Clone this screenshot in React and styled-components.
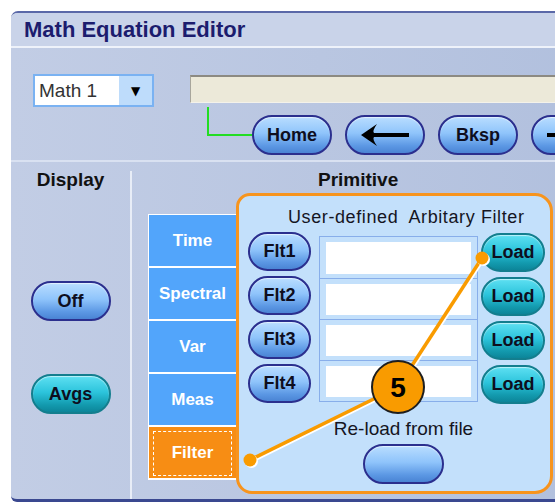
import React from 'react';
import styled, { createGlobalStyle, css } from 'styled-components';

const GlobalStyle = createGlobalStyle`
  html, body {
    margin: 0;
    padding: 0;
    background: #ffffff;
    overflow: hidden;
  }
  body {
    font-family: "Liberation Sans", Arial, sans-serif;
  }
`;

const Page = styled.div`
  position: relative;
  width: 555px;
  height: 502px;
  overflow: hidden;
  padding: 11px 0 0 11px;
  box-sizing: border-box;
`;

const Window = styled.div`
  width: 620px;
  height: 491px;
  box-sizing: border-box;
  border-top: 2px solid #5a68a8;
  border-bottom: 3px solid #3a4890;
  border-radius: 7px 7px 0 6px;
  display: flex;
  flex-direction: column;
  overflow: hidden;
  background: linear-gradient(to right, #c2cde5, #b0bfdd);
`;

const TitleBar = styled.div`
  height: 33px;
  flex-shrink: 0;
  background: #c9d3e9;
  border-bottom: 2px solid #eef2fa;
  display: flex;
  align-items: center;
  padding-left: 13px;
  font-size: 22px;
  font-weight: bold;
  color: #1c1c6e;
`;

const Toolbar = styled.div`
  height: 114px;
  flex-shrink: 0;
  box-sizing: border-box;
  padding: 26px 0 0 22px;
  border-bottom: 2px solid #d9e1f1;
  display: flex;
  flex-direction: column;
  gap: 8px;
`;

const Row = styled.div`
  display: flex;
  align-items: flex-start;
`;

const Select = styled.div`
  width: 121px;
  height: 33px;
  box-sizing: border-box;
  border: 2px solid #7ab2f2;
  display: flex;
`;

const SelectValue = styled.div`
  flex: 1;
  background: #ffffff;
  font-size: 19px;
  color: #333;
  display: flex;
  align-items: center;
  padding-left: 4px;
`;

const SelectArrow = styled.div`
  width: 33px;
  background: #bedcfb;
  display: flex;
  align-items: center;
  justify-content: center;
  font-family: "DejaVu Sans", sans-serif;
  font-size: 12px;
  color: #000;
`;

const ExprField = styled.div`
  margin-left: 36px;
  margin-top: 1px;
  width: 420px;
  height: 28px;
  box-sizing: border-box;
  background: #ece9d9;
  border-top: 2px solid #8c8a82;
  border-left: 1px solid #a8a69c;
  border-bottom: 1px solid #f4f2ea;
`;

const Connector = styled.div`
  margin-left: 174px;
  margin-top: -8px;
  width: 45px;
  height: 29px;
  box-sizing: border-box;
  border-left: 2px solid #22dd22;
  border-bottom: 2px solid #22dd22;
`;

const tones = {
  blue: css`
    border: 2px solid #2b2f8e;
    background: linear-gradient(to bottom, #b9ddff 0%, #8fc4fb 45%, #5c98e4 80%, #4a84d4 100%);
  `,
  teal: css`
    border: 2px solid #137e8e;
    background: linear-gradient(to bottom, #5ee0f2 0%, #2cc4dc 45%, #139aae 80%, #0c8599 100%);
  `,
};

const Pill = styled.button`
  width: ${p => p.$w || 80}px;
  height: ${p => p.$h || 40}px;
  flex-shrink: 0;
  box-sizing: border-box;
  border-radius: 20px;
  padding: 0;
  margin: 0;
  display: flex;
  align-items: center;
  justify-content: center;
  font-family: "Liberation Sans", Arial, sans-serif;
  font-size: 18px;
  font-weight: bold;
  color: #0e0e1e;
  box-shadow: inset 0 1px 1px rgba(255, 255, 255, 0.6);
  ${p => tones[p.$tone || 'blue']}
`;

const ToolButtons = styled.div`
  display: flex;
  gap: 13px;
`;

const Lower = styled.div`
  flex: 1;
  display: flex;
  min-height: 0;
`;

const DisplayCol = styled.div`
  width: 119px;
  flex-shrink: 0;
  display: flex;
  flex-direction: column;
  align-items: center;
  padding-top: 7px;
`;

const Heading = styled.div`
  font-size: 19px;
  font-weight: bold;
  line-height: 22px;
  color: #111;
  margin-left: ${p => p.$indent || 0}px;
`;

const Spacer = styled.div`
  height: ${p => p.$h}px;
`;

const Divider = styled.div`
  width: 2px;
  flex-shrink: 0;
  margin-top: 9px;
  background: #e8edf7;
`;

const PrimitiveCol = styled.div`
  flex: 1;
  padding: 7px 0 0 16px;
  display: flex;
  flex-direction: column;
`;

const Content = styled.div`
  margin-top: 2px;
  display: flex;
  align-items: flex-start;
`;

const Tabs = styled.div`
  margin-top: 21px;
  width: 88px;
  box-sizing: border-box;
  border-top: 1px solid #ffffff;
  border-left: 1px solid #ffffff;
  display: flex;
  flex-direction: column;
`;

const Tab = styled.div`
  height: 51px;
  border-bottom: 2px solid #ffffff;
  display: flex;
  align-items: center;
  justify-content: center;
  font-size: 17px;
  font-weight: bold;
  color: #ffffff;
  background: ${p => (p.$active ? '#f78d14' : '#52a5fb')};
  ${p =>
    p.$active &&
    css`
      outline: 1px dashed #ffffff;
      outline-offset: -5px;
    `}
`;

const Panel = styled.div`
  width: 317px;
  height: 301px;
  box-sizing: border-box;
  border: 3px solid #f7941d;
  border-radius: 14px 18px 18px 16px;
  background: #c3e0fb;
  display: flex;
  flex-direction: column;
`;

const PanelTitle = styled.div`
  margin: 10px 0 0 49px;
  font-size: 18px;
  line-height: 22px;
  letter-spacing: 0.6px;
  color: #15151f;
  white-space: pre;
`;

const FilterGrid = styled.div`
  margin-top: 4px;
  padding-left: 9px;
  display: flex;
  align-items: flex-start;
`;

const ButtonCol = styled.div`
  display: flex;
  flex-direction: column;
  gap: 5px;
  margin-top: ${p => p.$top || 0}px;
  margin-left: ${p => p.$left || 0}px;
`;

const FileBox = styled.div`
  margin: 4px 0 0 8px;
  width: 159px;
  box-sizing: border-box;
  border: 1px solid #88aeea;
`;

const FileRow = styled.div`
  height: 41px;
  box-sizing: border-box;
  padding: 5px 6px 4px;
  border-top: ${p => (p.$first ? 'none' : '1px solid #88aeea')};
  display: flex;
`;

const FileField = styled.div`
  flex: 1;
  background: #ffffff;
`;

const ReloadBlock = styled.div`
  margin: 14px 0 0 18px;
  display: flex;
  flex-direction: column;
  align-items: center;
  gap: 4px;
`;

const ReloadLabel = styled.div`
  font-size: 19px;
  line-height: 22px;
  color: #15151f;
`;

const Overlay = styled.svg`
  position: absolute;
  left: 0;
  top: 0;
  pointer-events: none;
`;

const LeftArrow = () => (
  <svg width="50" height="24" viewBox="0 0 50 24">
    <path d="M1 12 L17 1 Q12 8 14 10 L49 10 L49 14 L14 14 Q12 16 17 23 Z" fill="#000" />
  </svg>
);

const RightArrow = () => (
  <svg width="50" height="24" viewBox="0 0 50 24">
    <path d="M49 12 L33 1 Q38 8 36 10 L1 10 L1 14 L36 14 Q38 16 33 23 Z" fill="#000" />
  </svg>
);

const Callout = () => (
  <Overlay width="555" height="502" viewBox="0 0 555 502">
    <g stroke="#ffffff" strokeWidth="3" transform="translate(1.5 1.5)">
      <line x1="482" y1="258" x2="398" y2="387" />
      <line x1="250" y1="460" x2="398" y2="387" />
    </g>
    <g stroke="#f99b00" strokeWidth="3.5">
      <line x1="482" y1="258" x2="398" y2="387" />
      <line x1="250" y1="460" x2="398" y2="387" />
    </g>
    <circle cx="483.5" cy="259.5" r="6.5" fill="#ffffff" />
    <circle cx="482" cy="258" r="6.5" fill="#f99b00" />
    <circle cx="251.5" cy="461.5" r="6.5" fill="#ffffff" />
    <circle cx="250" cy="460" r="6.5" fill="#f99b00" />
    <circle cx="398" cy="387" r="26" fill="#f99b00" stroke="#1e1e1e" strokeWidth="2" />
    <text
      x="398"
      y="397"
      textAnchor="middle"
      fontFamily="Liberation Sans, Arial, sans-serif"
      fontWeight="bold"
      fontSize="28"
      fill="#000"
    >
      5
    </text>
  </Overlay>
);

const tabs = ['Time', 'Spectral', 'Var', 'Meas', 'Filter'];
const filters = ['Flt1', 'Flt2', 'Flt3', 'Flt4'];

export default function App() {
  return (
    <>
      <GlobalStyle />
      <Page>
        <Window>
          <TitleBar>Math Equation Editor</TitleBar>

          <Toolbar>
            <Row>
              <Select>
                <SelectValue>Math 1</SelectValue>
                <SelectArrow>▼</SelectArrow>
              </Select>
              <ExprField />
            </Row>
            <Row>
              <Connector />
              <ToolButtons>
                <Pill>Home</Pill>
                <Pill aria-label="Left">
                  <LeftArrow />
                </Pill>
                <Pill>Bksp</Pill>
                <Pill aria-label="Right">
                  <RightArrow />
                </Pill>
              </ToolButtons>
            </Row>
          </Toolbar>

          <Lower>
            <DisplayCol>
              <Heading>Display</Heading>
              <Spacer $h={90} />
              <Pill>Off</Pill>
              <Spacer $h={53} />
              <Pill $tone="teal">Avgs</Pill>
            </DisplayCol>

            <Divider />

            <PrimitiveCol>
              <Heading $indent={170}>Primitive</Heading>
              <Content>
                <Tabs>
                  {tabs.map(t => (
                    <Tab key={t} $active={t === 'Filter'}>
                      {t}
                    </Tab>
                  ))}
                </Tabs>
                <Panel>
                  <PanelTitle>User-defined  Arbitary Filter</PanelTitle>
                  <FilterGrid>
                    <ButtonCol>
                      {filters.map(f => (
                        <Pill key={f} $w={63} $h={39}>
                          {f}
                        </Pill>
                      ))}
                    </ButtonCol>
                    <FileBox>
                      {filters.map((f, i) => (
                        <FileRow key={f} $first={i === 0}>
                          <FileField />
                        </FileRow>
                      ))}
                    </FileBox>
                    <ButtonCol $top={1} $left={3}>
                      {filters.map(f => (
                        <Pill key={f} $tone="teal" $w={64} $h={39}>
                          Load
                        </Pill>
                      ))}
                    </ButtonCol>
                  </FilterGrid>
                  <ReloadBlock>
                    <ReloadLabel>Re-load from file</ReloadLabel>
                    <Pill $w={81} $h={40} />
                  </ReloadBlock>
                </Panel>
              </Content>
            </PrimitiveCol>
          </Lower>
        </Window>
        <Callout />
      </Page>
    </>
  );
}
